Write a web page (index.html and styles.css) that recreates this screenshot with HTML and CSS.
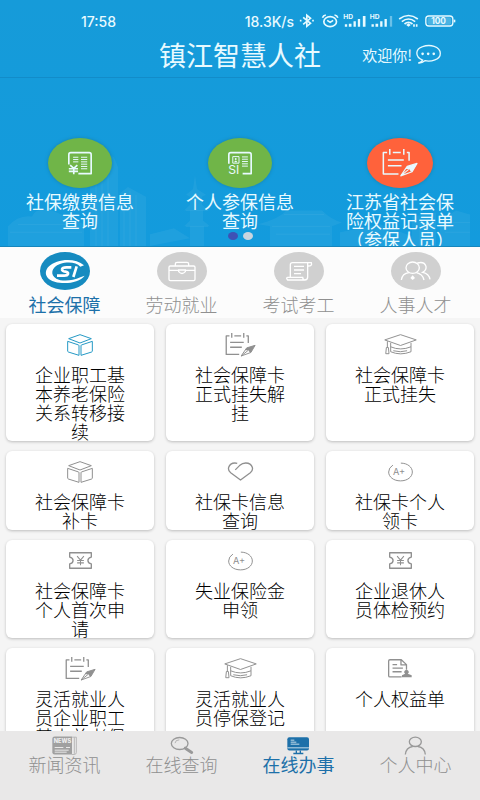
FILE: index.html
```html
<!DOCTYPE html>
<html lang="zh-CN">
<head>
<meta charset="utf-8">
<meta name="viewport" content="width=device-width, initial-scale=1">
<title>镇江智慧人社</title>
<link rel="stylesheet" href="styles.css">
</head>
<body>
<svg class="sprite" aria-hidden="true">
  <symbol id="cube" viewBox="0 0 78 66"><path d="M39 2L73 14 39 27 5 14ZM2 22L35 33Q36 34 36 36V64L4 54Q2 53 2 51ZM76 22L43 33Q42 34 42 36V64L74 54Q76 53 76 51Z" stroke-width="3"/></symbol>
  <symbol id="notepad" viewBox="0 0 94 74"><path d="M13 9H3V66H43M28 9H49M65 9H71V31M20 0V15M57 0V15M15 29H57M15 44H51" stroke-width="4"/><path d="M92 38L66 46 49 71 79 60ZM49 71L70 54" stroke-width="3"/><path class="solid" d="M92 38L66 46 61 53 71 53 76 60 79 60Z"/></symbol>
  <symbol id="cap" viewBox="0 0 100 64"><path d="M50 2L98 18 50 35 2 18ZM20 27V54Q50 67 82 54V27M20 39Q50 52 82 39M28 51Q50 57 70 51M10 22V41M7 41H13L15 60H5Z" stroke-width="3"/></symbol>
  <symbol id="heart" viewBox="0 0 80 58"><path d="M24 24L37 11Q46 3 56 3 72 3 76 16 79 26 70 33L40 55 10 33Q1 26 4 16 8 3 23 3 27 3 30 4" stroke-width="4"/></symbol>
  <symbol id="grade" viewBox="0 0 76 60"><path d="M39 3C59 3 74 15 74 30S59 57 38 57 2 45 2 30Q2 17 15 9" stroke-width="3"/><text x="15" y="40" font-size="28">A+</text></symbol>
  <symbol id="ticket" viewBox="0 0 68 50"><path d="M2 2H66V15Q56 17 56 25T66 35V48H2V35Q12 33 12 25T2 15Z" stroke-width="4"/><path d="M24 12L34 24 44 12M34 24V39M24 25H44M24 32H44" stroke-width="3"/></symbol>
  <symbol id="record" viewBox="0 0 74 58"><path d="M42 55H6Q2 55 2 51V6Q2 2 6 2H41L57 17V33M40 3V18H56M14 17H28M14 28H46M14 39H42" stroke-width="4"/><path class="solid" d="M57 34a7 6 0 0 1 4 11L73 50V56H43V50L53 45A7 6 0 0 1 57 34Z"/></symbol>
</svg>

<header class="top">
  <svg class="skyline" viewBox="0 0 480 120" preserveAspectRatio="none" aria-hidden="true">
    <path d="M90 120V28L94 26V26L102 22 114 30 118 40V120ZM120 120V66L128 60 146 70V120ZM8 120V100Q18 88 32 90 36 80 52 84 66 90 84 98V120ZM190 120V100H184L190 94V84H184L190 78V70L186 68 193 62 195 48 197 62 206 68 202 70V78L209 84H203V94L210 100H204V120ZM150 120V108L174 102 190 112ZM270 120V100L258 98Q280 92 286 84H322Q332 94 342 96L332 100V120ZM340 120V106L380 98 412 110V90L436 86V120ZM440 120V94L456 84 470 88V120Z"/>
    <path class="detail" d="M96 28V120M102 24V120M108 28V120M124 68V120M130 64V120M136 68V120M186 84H208M186 100H208M272 100H330M276 108H330M284 88H324M420 92V120M428 92V120M445 96H470M445 106H470M10 106H82M18 98H70"/>
  </svg>
  <div class="status">
    <span>17:58</span>
    <span class="speed">18.3K/s</span>
    <svg class="status-icons" viewBox="0 0 470 45" aria-label="蓝牙 闹钟 信号 无线网络">
      <g fill="none" stroke="currentColor" stroke-width="5">
        <path d="M12 10L34 28 23 37V4L34 13 12 31M2 20H7M39 20H44"/>
        <ellipse cx="93" cy="23" rx="19" ry="15"/><path d="M84 19L93 25 102 19M70 11Q72 4 80 3M116 11Q114 4 106 3"/>
        <path d="M300 15Q328 -6 356 15M308 23Q328 7 348 23M316 30Q328 20 340 30" stroke-width="5"/>
        <rect x="380" y="6" width="81" height="30" rx="9" stroke-width="4"/><path d="M466 17V25"/>
      </g>
      <g fill="currentColor">
        <path d="M137 31h7v7h-7zM149 29h8v9h-8zM163 22h7v16h-7zM176 15h7v23h-7zM191 6h8v32h-8zM217 31h7v7h-7zM229 29h8v9h-8zM243 22h7v16h-7zM256 15h7v23h-7zM321 33L328 38 335 33 328 28ZM342 31H347V38H342ZM350 31H355V38H350Z"/>
        <path opacity=".4" d="M272 6h7v32h-7z"/>
        <rect x="385" y="10" width="71" height="22" rx="5" opacity=".25"/>
        <g class="bold"><text x="132" y="16" font-size="20">HD</text><text x="212" y="16" font-size="20">HD</text><text x="396" y="30" font-size="25">100</text></g>
      </g>
    </svg>
  </div>
  <div class="titlebar">
    <h1>镇江智慧人社</h1>
    <a class="welcome" href="#message">欢迎你!
      <svg viewBox="0 0 76 58" aria-hidden="true"><path d="M20 46C-4 37-3 12 20 5 43-3 73 4 74 25 75 45 45 52 27 48Q18 56 7 55 17 51 20 46Z" fill="none" stroke="currentColor" stroke-width="4"/><g fill="currentColor"><circle cx="20" cy="27" r="4"/><circle cx="37" cy="27" r="4"/><circle cx="54" cy="27" r="4"/></g></svg>
    </a>
  </div>
  <nav class="hero" aria-label="快捷服务">
    <a href="#pay"><span class="disc">
      <svg class="line" viewBox="0 0 72 70"><path d="M2 38V8Q2 2 8 2H64Q70 2 70 8V66H31" stroke-width="5"/><path d="M15 16H31M15 23H31M15 30H31M39 16H58M39 23H58M39 30H58M39 37H58M39 44H58M39 51H58" stroke-width="3"/><path d="M6 40L17 50 28 40M17 50V68M2 51H30M2 59H30" stroke-width="5"/></svg>
    </span>社保缴费信息查询</a>
    <a href="#insured"><span class="disc">
      <svg class="line" viewBox="0 0 72 70"><path d="M2 36V8Q2 2 8 2H64Q70 2 70 8V66H44" stroke-width="5"/><path d="M14 14H33V34H14ZM42 15H60M42 22H60M42 29H60M42 36H60M42 43H60" stroke-width="3"/><circle class="solid" cx="23" cy="21" r="3"/><path class="solid" d="M18 31Q23 21 28 31Z"/><text x="0" y="67" font-size="37">SI</text></svg>
    </span>个人参保信息查询</a>
    <a href="#rights"><span class="disc orange"><svg class="line wide"><use href="#notepad"/></svg></span>江苏省社会保险权益记录单（参保人员）</a>
  </nav>
  <div class="dots" aria-hidden="true"><i class="on"></i><i></i></div>
</header>

<nav class="tabs" aria-label="业务分类">
  <a class="active" href="#social"><span class="oval"><svg viewBox="0 0 150 114" aria-hidden="true"><path d="M132 40C113 23 79 20 51 29 10 42 6 78 44 89 77 99 118 91 134 71L121 76C95 88 64 88 49 80 29 69 34 45 60 36 83 29 108 30 121 44Z" fill="#fff"/><path d="M94 46H80Q67 46 66 52 65 57 76 59 86 61 84 66 82 71 73 71H51M110 43L100 75" fill="none" stroke="#fff" stroke-width="8"/></svg></span>社会保障</a>
  <a href="#work"><span class="oval"><svg viewBox="0 0 150 114" aria-hidden="true"><path d="M40 42H110Q114 42 114 46V82Q114 86 110 86H40Q36 86 36 82V46Q36 42 40 42ZM55 41V36Q55 31 60 31H90Q95 31 95 36V41M36 55H65M85 55H114M65 54H85V59Q75 70 65 59Z"/></svg></span>劳动就业</a>
  <a href="#exam"><span class="oval"><svg viewBox="0 0 150 114" aria-hidden="true"><path d="M49 77V38Q49 32 56 32H112Q116 43 101 42V75Q101 84 92 84H41Q35 77 41 76H86Q87 84 92 84M101 42V32M60 43H90M60 54H90M60 65H81"/></svg></span>考试考工</a>
  <a href="#talent"><span class="oval"><svg viewBox="0 0 150 114" aria-hidden="true"><ellipse cx="65" cy="47" rx="20" ry="17"/><path d="M31 84Q34 64 54 62M76 62Q95 66 99 84M79 33Q100 27 105 43 107 54 95 61 114 65 117 82"/><path d="M65 70L72 78 65 84 58 78Z" fill="#fff" stroke="none"/></svg></span>人事人才</a>
</nav>

<main class="services">
  <a class="card current" href="#s1"><span class="icon"><svg class="line cube"><use href="#cube"/></svg></span>企业职工基本养老保险关系转移接续</a>
  <a class="card" href="#s2"><span class="icon"><svg class="line wide"><use href="#notepad"/></svg></span>社会保障卡正式挂失解挂</a>
  <a class="card" href="#s3"><span class="icon"><svg class="line cap"><use href="#cap"/></svg></span>社会保障卡正式挂失</a>
  <a class="card" href="#s4"><span class="icon"><svg class="line cube"><use href="#cube"/></svg></span>社会保障卡补卡</a>
  <a class="card" href="#s5"><span class="icon"><svg class="line heart"><use href="#heart"/></svg></span>社保卡信息查询</a>
  <a class="card" href="#s6"><span class="icon"><svg class="line grade"><use href="#grade"/></svg></span>社保卡个人领卡</a>
  <a class="card" href="#s7"><span class="icon"><svg class="line ticket"><use href="#ticket"/></svg></span>社会保障卡个人首次申请</a>
  <a class="card" href="#s8"><span class="icon"><svg class="line grade"><use href="#grade"/></svg></span>失业保险金申领</a>
  <a class="card" href="#s9"><span class="icon"><svg class="line ticket"><use href="#ticket"/></svg></span>企业退休人员体检预约</a>
  <a class="card" href="#s10"><span class="icon"><svg class="line wide"><use href="#notepad"/></svg></span>灵活就业人员企业职工基本养老保险参保</a>
  <a class="card" href="#s11"><span class="icon"><svg class="line cap"><use href="#cap"/></svg></span>灵活就业人员停保登记</a>
  <a class="card" href="#s12"><span class="icon"><svg class="line record"><use href="#record"/></svg></span>个人权益单</a>
</main>

<nav class="bottom" aria-label="主导航">
  <a href="#news"><svg viewBox="0 0 75 56" aria-hidden="true"><path d="M8 1H60V52Q60 55 56 55H8Q1 55 1 48V8Q1 1 8 1Z" fill="#a0a0a0"/><path d="M60 3H73V49Q73 55 66 55H58M67 3V53" fill="none" stroke="#b8b8b8" stroke-width="3"/><path d="M8 34H34M8 42H50M8 48H44M42 34H54" stroke="#e9e8e8" stroke-width="3"/><text x="5" y="22" font-size="17" class="news">NEWS</text></svg>新闻资讯</a>
  <a href="#query"><svg viewBox="0 0 75 56" aria-hidden="true"><g fill="none" stroke="#999"><ellipse cx="32" cy="22" rx="25" ry="18" stroke-width="4"/><path d="M18 21Q19 11 31 11" stroke-width="2"/><path d="M49 36L68 49" stroke-width="9" stroke-linecap="round"/></g></svg>在线查询</a>
  <a class="active" href="#service"><svg viewBox="0 0 75 56" aria-hidden="true"><rect x="4" y="3" width="65" height="40" rx="6" fill="#1d70a9"/><path d="M4 35H69" stroke="#c6dce9" stroke-width="3"/><path d="M14 12H25M14 18H31M14 24H40" stroke="#c6dce9" stroke-width="3"/><path d="M31 43V51M43 43V51M22 52H52" stroke="#1d70a9" stroke-width="4"/></svg>在线办事</a>
  <a href="#me"><svg viewBox="0 0 75 56" aria-hidden="true"><g fill="none" stroke="#999" stroke-width="4"><ellipse cx="37" cy="17" rx="18" ry="14"/><path d="M7 55Q9 34 29 31M45 31Q65 34 67 55"/></g></svg>个人中心</a>
</nav>
</body>
</html>
```
FILE: styles.css
```css
* {
  box-sizing: border-box;
}

body {
  margin: 0;
  height: 100vh;
  display: flex;
  flex-direction: column;
  overflow: hidden;
  background: #f5f5f5;
  color: #000;
  font-family: "Noto Sans CJK SC", sans-serif;
  font-size: 18px;
  font-weight: 300;
  line-height: 19px;
}

a {
  color: inherit;
  text-decoration: none;
}

svg {
  display: block;
  flex: none;
  overflow: visible;
}

.sprite {
  position: absolute;
  width: 0;
  height: 0;
}

.line {
  fill: none;
  stroke: currentColor;
  stroke-linejoin: round;
}

.line text,
symbol text,
.solid {
  fill: currentColor;
  stroke: none;
}

svg text {
  font-family: "Inter", sans-serif;
  font-weight: 400;
}

svg .bold text {
  font-weight: 700;
}

/* Header and banner */
.top {
  position: relative;
  flex: none;
  height: 247px;
  overflow: hidden;
  background: linear-gradient(#169bd9, #139bdd);
  border-bottom: 1px solid #1686bc;
  color: #e8faff;
  font-weight: 400;
}

.skyline {
  position: absolute;
  left: 0;
  bottom: 0;
  width: 100%;
  height: 118px;
  fill: #fff;
  fill-opacity: 0.05;
}

.skyline .detail {
  fill: none;
  stroke: #fff;
  stroke-opacity: 0.06;
}

.status {
  display: flex;
  align-items: center;
  height: 32px;
  padding: 10px 24px 0 81px;
  font-family: "Inter", sans-serif;
  font-size: 14px;
  font-weight: 500;
}

.speed {
  margin-left: auto;
  margin-right: 5px;
}

.status-icons {
  width: 157px;
  height: 15px;
}

.titlebar {
  display: grid;
  grid-template-columns: 1fr auto 1fr;
  align-items: center;
  height: 46px;
  border-bottom: 1px solid #128cc9;
}

.titlebar h1 {
  grid-column: 2;
  margin: 0;
  font-size: 27px;
  line-height: 32px;
  font-weight: 400;
}

.welcome {
  display: flex;
  align-items: center;
  justify-content: flex-end;
  gap: 4px;
  padding-right: 39px;
  font-size: 15px;
}

.welcome svg {
  width: 25px;
  height: 19px;
}

.hero {
  position: relative;
  display: grid;
  grid-template-columns: repeat(3, 1fr);
  padding-top: 60px;
}

.hero a {
  display: flex;
  flex-direction: column;
  align-items: center;
  padding: 0 24px;
  text-align: center;
}

.disc {
  display: grid;
  place-items: center;
  width: 64px;
  height: 50px;
  margin-bottom: 4px;
  border-radius: 50%;
  background: #70b548;
  box-shadow: 0 0 3px 1px #168dc0;
}

.disc.orange {
  width: 66px;
  background: #ff623b;
}

.disc svg {
  width: 24px;
  height: 23px;
}

.disc .wide {
  width: 36px;
  height: 28px;
}

.dots {
  position: absolute;
  left: 0;
  right: 0;
  bottom: 6px;
  display: flex;
  justify-content: center;
  gap: 5px;
}

.dots i {
  width: 10px;
  height: 8px;
  border-radius: 50%;
  background: #c9d5df;
}

.dots .on {
  background: #3e51b5;
}

/* Category tabs and bottom navigation */
.tabs,
.bottom {
  flex: none;
  display: grid;
  grid-template-columns: repeat(4, 1fr);
  padding: 0 6px;
  color: #909090;
}

.tabs a,
.bottom a {
  display: flex;
  flex-direction: column;
  align-items: center;
}

.tabs {
  height: 71px;
  padding-top: 5px;
  background: #fcfcfc;
}

.oval {
  width: 50px;
  height: 38px;
  margin-bottom: 5px;
  border-radius: 50%;
  background: #d0d0d0;
}

.oval svg {
  width: 50px;
  height: 38px;
  fill: none;
  stroke: #fff;
  stroke-width: 4;
}

.tabs .active,
.bottom .active {
  color: #1d70a9;
  font-weight: 400;
}

.active .oval {
  background: #168bc0;
}

.active .oval svg {
  stroke: none;
}

.bottom {
  height: 69px;
  padding-top: 5px;
  background: #e9e8e8;
}

.bottom svg {
  width: 25px;
  height: 19px;
}

.bottom .news {
  fill: #eee;
  font-weight: 800;
}

/* Service cards */
.services {
  flex: 1;
  min-height: 0;
  display: grid;
  grid-template-columns: repeat(3, 1fr);
  grid-auto-rows: max-content;
  gap: 10px 12px;
  padding: 6px;
  overflow: hidden;
}

.card {
  padding: 0 24px;
  border-radius: 6px;
  background: #fff;
  box-shadow: 0 1px 3px #0000003b;
  text-align: center;
}

.icon {
  display: grid;
  place-items: center;
  height: 41px;
  color: #909090;
}

.current .icon {
  color: #2599c5;
}

.cube {
  width: 26px;
  height: 22px;
}

.card .wide {
  width: 31px;
  height: 24px;
}

.cap {
  width: 33px;
  height: 21px;
}

.heart {
  width: 27px;
  height: 19px;
}

.grade {
  width: 25px;
  height: 20px;
}

.ticket {
  width: 23px;
  height: 17px;
}

.record {
  width: 24px;
  height: 19px;
}
```
